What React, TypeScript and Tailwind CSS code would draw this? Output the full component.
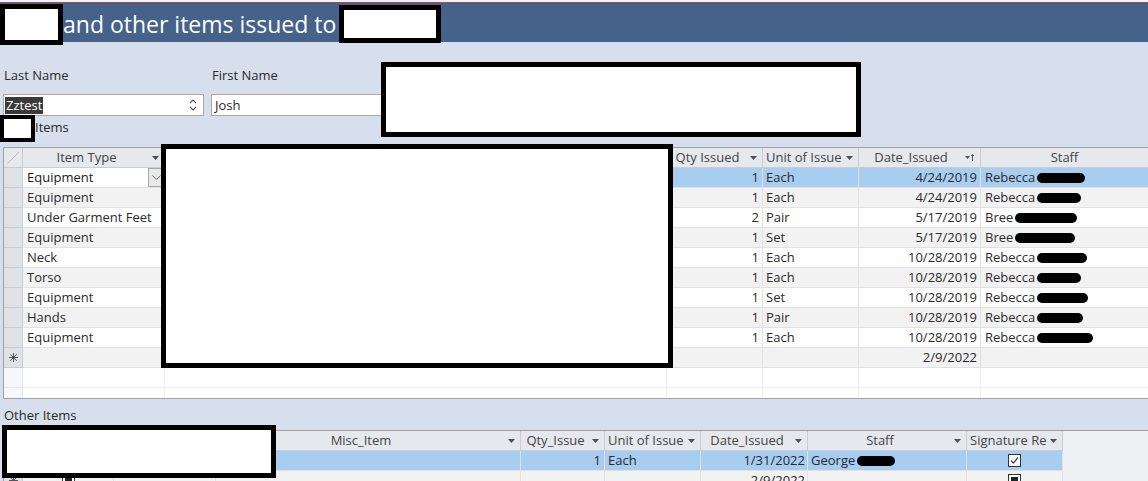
import React from 'react'

type Issue = { type: string; qty: number; unit: string; date: string; staff: string; mark: number }

const issued: Issue[] = [
  { type: 'Equipment', qty: 1, unit: 'Each', date: '4/24/2019', staff: 'Rebecca', mark: 48 },
  { type: 'Equipment', qty: 1, unit: 'Each', date: '4/24/2019', staff: 'Rebecca', mark: 44 },
  { type: 'Under Garment Feet', qty: 2, unit: 'Pair', date: '5/17/2019', staff: 'Bree', mark: 62 },
  { type: 'Equipment', qty: 1, unit: 'Set', date: '5/17/2019', staff: 'Bree', mark: 60 },
  { type: 'Neck', qty: 1, unit: 'Each', date: '10/28/2019', staff: 'Rebecca', mark: 50 },
  { type: 'Torso', qty: 1, unit: 'Each', date: '10/28/2019', staff: 'Rebecca', mark: 44 },
  { type: 'Equipment', qty: 1, unit: 'Set', date: '10/28/2019', staff: 'Rebecca', mark: 51 },
  { type: 'Hands', qty: 1, unit: 'Pair', date: '10/28/2019', staff: 'Rebecca', mark: 46 },
  { type: 'Equipment', qty: 1, unit: 'Each', date: '10/28/2019', staff: 'Rebecca', mark: 56 },
]

function DropArrow() {
  return (
    <svg width="7" height="4" viewBox="0 0 7 4" className="shrink-0">
      <path d="M0 0h7L3.5 4z" fill="#505050" />
    </svg>
  )
}

function SortArrow() {
  return (
    <svg width="10" height="9" viewBox="0 0 10 9" className="shrink-0">
      <path d="M0 3h5L2.5 6z" fill="#505050" />
      <path d="M7.5 1.5V8M6 3l1.5-1.5L9 3" stroke="#505050" strokeWidth="1" fill="none" />
    </svg>
  )
}

function NewRowStar() {
  return (
    <svg width="9" height="9" viewBox="0 0 9 9">
      <path d="M4.5 0v9M0 4.5h9M1.3 1.3l6.4 6.4M7.7 1.3l-6.4 6.4" stroke="#555" strokeWidth="1" />
    </svg>
  )
}

function Head({ className, label, icon, left }: { className: string; label?: string; icon?: React.ReactNode; left?: boolean }) {
  return (
    <div className={`${className} h-full shrink-0 flex items-center gap-[2px] border-r border-[#c9cdd3] pr-[5px] overflow-hidden`}>
      <span className={`flex-1 min-w-0 whitespace-nowrap overflow-hidden ${left ? 'pl-[3px] text-left' : 'text-center'}`}>{label}</span>
      {icon}
    </div>
  )
}

// black marker strokes over the surnames
function Scribble({ width }: { width: number }) {
  return <span className="ml-[2px] inline-block h-[10px] rounded-full bg-black" style={{ width }} />
}

function Check({ state }: { state: 'on' | 'null' }) {
  return (
    <div className="w-[13px] h-[13px] border border-[#333] bg-white flex items-center justify-center">
      {state === 'on' ? (
        <svg width="11" height="11" viewBox="0 0 11 11">
          <path d="M2 5.5l2.5 2.5L9 2.5" stroke="#444" strokeWidth="1.2" fill="none" />
        </svg>
      ) : (
        <div className="w-[7px] h-[7px] bg-[#222]" />
      )}
    </div>
  )
}

function Redact({ className }: { className: string }) {
  return <div className={`absolute bg-white border-black ${className}`} />
}

export default function App() {
  const cell = 'h-full shrink-0 border-r border-b border-[#e1e1e1] leading-[19px] whitespace-nowrap overflow-hidden'
  const sel = 'w-[19px] h-full shrink-0 bg-[#dfe3e8] border-r border-b border-[#c9cdd3] flex items-center justify-center'

  return (
    <div className="relative w-[1148px] h-[481px] overflow-hidden bg-[#d6dfeb] font-['Open_Sans',sans-serif] text-[13px] text-[#2a2a2a]">
      {/* Title bar */}
      <div className="h-[2px] bg-[#eef1f5]" />
      <div className="h-[1px] bg-[#b4414b]" />
      <div className="h-[39px] bg-[#45628a] flex items-center pl-[63px] pt-[2px] text-white text-[23px] leading-[30px]">
        and other items issued to
      </div>

      {/* Name fields */}
      <div className="flex mt-[24px] h-[18px] leading-[18px]">
        <span className="ml-[4px] w-[208px]">Last Name</span>
        <span>First Name</span>
      </div>
      <div className="flex mt-[10px] h-[22px]">
        <div className="ml-[3px] w-[201px] h-[22px] border border-[#a9a9a9] bg-white flex items-center pl-[1px]">
          <span className="bg-[#3a3a3a] text-white px-[1px] leading-[17px]">Zztest</span>
          <svg width="8" height="16" viewBox="0 0 8 16" className="ml-auto mr-[6px]">
            <path d="M1 6l3-3 3 3M1 10l3 3 3-3" stroke="#555" strokeWidth="1.2" fill="none" />
          </svg>
        </div>
        <div className="ml-[7px] w-[200px] h-[22px] border border-[#a9a9a9] bg-white flex items-center pl-[3px] leading-[18px]">
          Josh
        </div>
      </div>
      <div className="mt-[2px] h-[18px] leading-[18px] pl-[35px]">Items</div>

      {/* Items datasheet */}
      <div className="mt-[11px] ml-[3px] w-[1145px] h-[252px] border-l border-t border-b border-[#a0a0a0] bg-white overflow-hidden">
        <div className="flex h-[20px] bg-[#e5e8ed] border-b border-[#c9cdd3] text-[#444] leading-[19px]">
          <div className="w-[19px] h-full shrink-0 border-r border-[#c9cdd3]">
            <svg width="18" height="19" viewBox="0 0 18 19">
              <path d="M3 16L15 4" stroke="#c3c7cd" strokeWidth="1" />
            </svg>
          </div>
          <Head className="w-[142px]" label="Item Type" icon={<DropArrow />} />
          <Head className="w-[502px]" />
          <Head className="w-[96px]" label="Qty Issued" icon={<DropArrow />} />
          <Head className="w-[96px]" label="Unit of Issue" icon={<DropArrow />} left />
          <Head className="w-[122px]" label="Date_Issued" icon={<SortArrow />} />
          <div className="flex-1 h-full flex items-center justify-center">Staff</div>
        </div>

        {issued.map((r, i) => {
          const current = i === 0
          const bg = current ? 'bg-[#a7cdf0]' : i % 2 === 1 ? 'bg-[#f2f2f2]' : 'bg-white'
          return (
            <div key={i} className={`flex h-[20px] ${current ? 'bg-white' : bg}`}>
              <div className={sel} />
              <div className={`${cell} w-[142px] pl-[4px] flex items-center justify-between ${current ? 'text-[#1a1a1a]' : ''}`}>
                <span>{r.type}</span>
                {current && (
                  <div className="w-[16px] h-[19px] bg-[#e9e9e9] border border-[#a8a8a8] flex items-center justify-center">
                    <svg width="9" height="5" viewBox="0 0 9 5">
                      <path d="M0.5 0.5l4 4 4-4" stroke="#666" strokeWidth="1" fill="none" />
                    </svg>
                  </div>
                )}
              </div>
              <div className={`${cell} w-[502px] ${bg}`} />
              <div className={`${cell} w-[96px] text-right pr-[3px] ${bg}`}>{r.qty}</div>
              <div className={`${cell} w-[96px] pl-[3px] ${bg}`}>{r.unit}</div>
              <div className={`${cell} w-[122px] text-right pr-[3px] ${bg}`}>{r.date}</div>
              <div className={`${cell} flex-1 pl-[4px] flex items-center border-r-0 ${bg}`}>
                <span>{r.staff}</span>
                <Scribble width={r.mark} />
              </div>
            </div>
          )
        })}

        {/* new record row */}
        <div className="flex h-[20px] bg-[#f2f2f2]">
          <div className={sel}>
            <NewRowStar />
          </div>
          <div className={`${cell} w-[142px]`} />
          <div className={`${cell} w-[502px]`} />
          <div className={`${cell} w-[96px]`} />
          <div className={`${cell} w-[96px]`} />
          <div className={`${cell} w-[122px] text-right pr-[3px]`}>2/9/2022</div>
          <div className={`${cell} flex-1 border-r-0`} />
        </div>

        {/* empty space under the records */}
        {['h-[20px]', 'h-[10px]'].map((h, i) => (
          <div key={h} className={`flex ${h} bg-white`}>
            <div className={`w-[19px] h-full shrink-0 bg-[#f6f7fb] border-r border-[#e6e8ee] ${i === 0 ? 'border-b' : ''}`} />
            {['w-[142px]', 'w-[502px]', 'w-[96px]', 'w-[96px]', 'w-[122px]'].map((w) => (
              <div key={w} className={`${w} h-full shrink-0 border-r border-[#efefef] ${i === 0 ? 'border-b' : ''}`} />
            ))}
            <div className={`flex-1 h-full border-[#efefef] ${i === 0 ? 'border-b' : ''}`} />
          </div>
        ))}
      </div>

      {/* Other items datasheet */}
      <div className="mt-[7px] h-[18px] leading-[18px] pl-[4px]">Other Items</div>
      <div className="mt-[6px] ml-[3px] w-[1145px] h-[60px] border-l border-t border-[#a0a0a0] bg-[#eef0f3] overflow-hidden">
        <div className="flex h-[20px] text-[#444] leading-[19px]">
          <div className="w-[19px] h-full shrink-0 bg-[#e5e8ed] border-r border-b border-[#c9cdd3]" />
          <div className="flex h-full bg-[#e5e8ed] border-b border-[#c9cdd3]">
            <Head className="w-[91px]" />
            <Head className="w-[102px]" />
            <Head className="w-[305px]" label="Misc_Item" icon={<DropArrow />} />
            <Head className="w-[84px]" label="Qty_Issue" icon={<DropArrow />} />
            <Head className="w-[96px]" label="Unit of Issue" icon={<DropArrow />} left />
            <Head className="w-[107px]" label="Date_Issued" icon={<DropArrow />} />
            <Head className="w-[159px]" label="Staff" icon={<DropArrow />} />
            <Head className="w-[96px]" label="Signature Re" icon={<DropArrow />} left />
          </div>
        </div>

        <div className="flex h-[20px]">
          <div className={sel} />
          <div className={`${cell} w-[91px] bg-[#a7cdf0] flex items-center justify-center`}>
            <Check state="on" />
          </div>
          <div className={`${cell} w-[102px] bg-[#a7cdf0]`} />
          <div className={`${cell} w-[305px] bg-[#a7cdf0]`} />
          <div className={`${cell} w-[84px] bg-[#a7cdf0] text-right pr-[3px]`}>1</div>
          <div className={`${cell} w-[96px] bg-[#a7cdf0] pl-[3px]`}>Each</div>
          <div className={`${cell} w-[107px] bg-[#a7cdf0] text-right pr-[2px]`}>1/31/2022</div>
          <div className={`${cell} w-[159px] bg-[#a7cdf0] pl-[3px] flex items-center`}>
            <span>George</span>
            <Scribble width={38} />
          </div>
          <div className={`${cell} w-[96px] bg-[#a7cdf0] flex items-center justify-center`}>
            <Check state="on" />
          </div>
        </div>

        <div className="flex h-[20px]">
          <div className={sel}>
            <NewRowStar />
          </div>
          <div className={`${cell} w-[91px] bg-[#f2f2f2] flex items-center justify-center`}>
            <Check state="null" />
          </div>
          <div className={`${cell} w-[102px] bg-[#f2f2f2]`} />
          <div className={`${cell} w-[305px] bg-[#f2f2f2]`} />
          <div className={`${cell} w-[84px] bg-[#f2f2f2]`} />
          <div className={`${cell} w-[96px] bg-[#f2f2f2]`} />
          <div className={`${cell} w-[107px] bg-[#f2f2f2] text-right pr-[2px]`}>2/9/2022</div>
          <div className={`${cell} w-[159px] bg-[#f2f2f2]`} />
          <div className={`${cell} w-[96px] bg-[#f2f2f2] flex items-center justify-center`}>
            <Check state="null" />
          </div>
        </div>
      </div>

      {/* redactions */}
      <Redact className="left-0 top-[4px] w-[63px] h-[41px] border-[5px]" />
      <Redact className="left-[339px] top-[5px] w-[102px] h-[38px] border-[5px]" />
      <Redact className="left-[381px] top-[62px] w-[480px] h-[75px] border-[5px]" />
      <Redact className="left-0 top-[115px] w-[35px] h-[27px] border-[4px]" />
      <Redact className="left-[161px] top-[144px] w-[512px] h-[224px] border-[5px]" />
      <Redact className="left-[2px] top-[425px] w-[274px] h-[53px] border-[5px]" />
    </div>
  )
}
